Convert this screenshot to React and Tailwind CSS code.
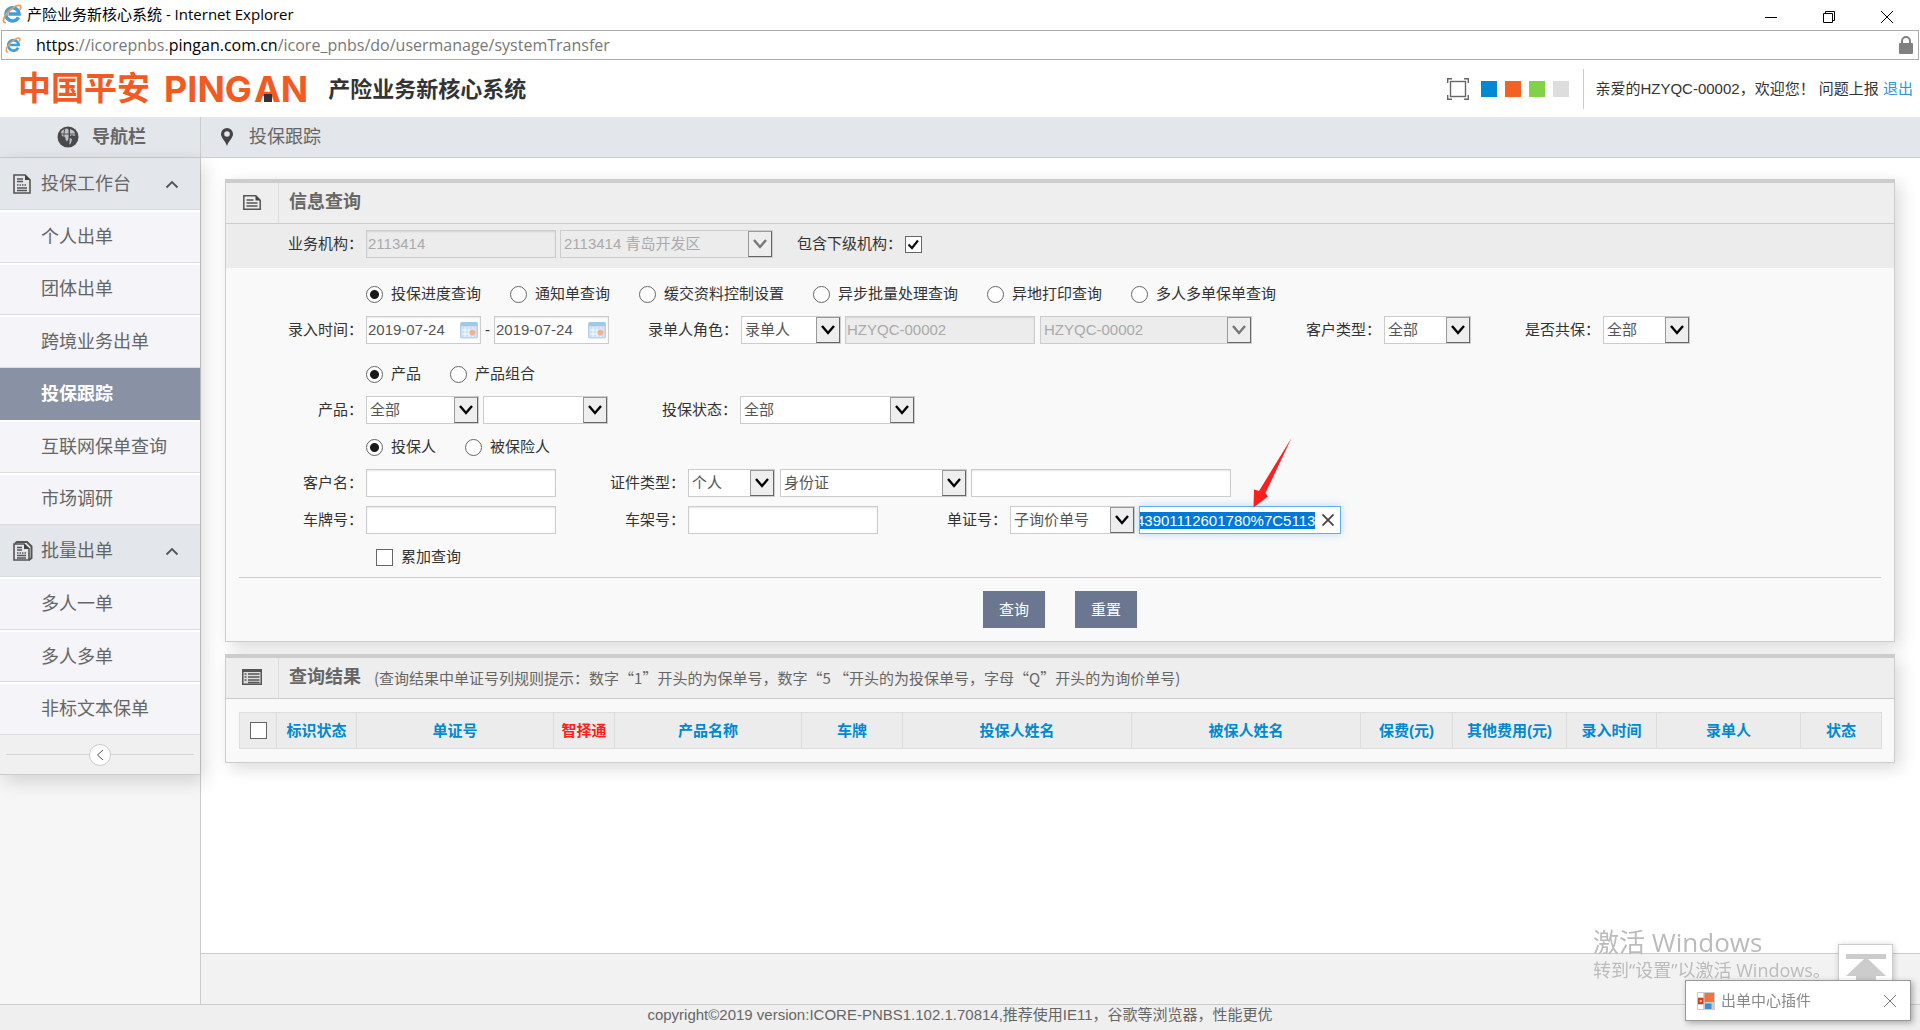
import { useEffect, useRef, useState } from 'react'
import clsx from 'clsx'

const MENU = [
  {
    id: 'work',
    title: '投保工作台',
    icon: <DocIcon />,
    items: ['个人出单', '团体出单', '跨境业务出单', '投保跟踪', '互联网保单查询', '市场调研'],
    height: 'h-[315px]',
  },
  {
    id: 'batch',
    title: '批量出单',
    icon: <DocsIcon />,
    items: ['多人一单', '多人多单', '非标文本保单'],
    height: 'h-[158px]',
  },
]

const QUERY_TYPES = [
  '投保进度查询',
  '通知单查询',
  '缓交资料控制设置',
  '异步批量处理查询',
  '异地打印查询',
  '多人多单保单查询',
]

const COLUMNS = [
  { name: '标识状态', width: 'w-[80px]' },
  { name: '单证号', width: 'w-[197px]' },
  { name: '智择通', width: 'w-[61px]', hot: true },
  { name: '产品名称', width: 'w-[187px]' },
  { name: '车牌', width: 'w-[101px]' },
  { name: '投保人姓名', width: 'w-[229px]' },
  { name: '被保人姓名', width: 'w-[229px]' },
  { name: '保费(元)', width: 'w-[92px]' },
  { name: '其他费用(元)', width: 'w-[114px]' },
  { name: '录入时间', width: 'w-[90px]' },
  { name: '录单人', width: 'w-[144px]' },
  { name: '状态', width: 'w-[81px]' },
]

function IeIcon({ className }) {
  return (
    <svg viewBox="0 0 20 20" className={className} fill="none" aria-hidden="true">
      <path d="M16.5 13.2a6.6 6.6 0 1 1 .6-3.2H6.4" stroke="#3d9fdc" strokeWidth="3.4" />
      <path d="M4 18.6C.2 19.6.6 14 5.6 8.4 10.400 3 17.600-.4 18.600 2.200c.4 1-.2 2.600-.8 3.400" stroke="#ee9a5b" strokeWidth="1.800" />
    </svg>
  )
}

function DocIcon() {
  return (
    <svg viewBox="0 0 18 20" className="w-[18px] h-5 shrink-0" fill="none" stroke="#555" aria-hidden="true">
      <path d="M1 1h11l5 5v13H1z" strokeWidth="1.600" />
      <path d="M12 0.500v5.500h5.500z" fill="#444" stroke="none" />
      <path d="M4 5h6M4 7.500h6M4 14h10M4 16.500h10" strokeWidth="1.400" />
      <path d="M4 11h10" strokeWidth="1.400" strokeDasharray="1.500 1" />
    </svg>
  )
}

function DocsIcon() {
  return (
    <svg viewBox="0 0 20 20" className="w-5 h-5 shrink-0" fill="none" stroke="#555" aria-hidden="true">
      <path d="M1 3h10l5 5v11H1z" strokeWidth="1.600" />
      <path d="M2 2.500L4 1h10l4.500 4.500V17L16 19" strokeWidth="2" />
      <path d="M11 2.500v5.500h6z" fill="#444" stroke="none" />
      <path d="M4 6.500h5M4 9h5M4 14.500h9M4 17h9" strokeWidth="1.400" />
      <path d="M4 12h9" strokeWidth="1.400" strokeDasharray="1.500 1" />
    </svg>
  )
}

function GlobeIcon() {
  return (
    <svg viewBox="0 0 22 22" className="w-[22px] h-[22px]" aria-hidden="true">
      <circle cx="11" cy="11" r="10.500" fill="#4a4a4a" />
      <path d="M4 6c1.500-2 4-3.500 6-3.500l2 1.500v8l-2 3.500-1.500-2v-2L5 10z" fill="#bfc3c9" />
      <path d="M13 3l4 2 1.500 4-1.500 1-2-1-2 1zM12.500 12l2.500 1-1 4-2 2z" fill="#bfc3c9" />
      <path d="M8 2.500c-1.500 4-1.500 11 0 16M3 8h16M12 2v18" stroke="#4a4a4a" strokeWidth=".9" fill="none" />
    </svg>
  )
}

function Chevron({ className, d = 'M1 1l6 7 6-7', thin }) {
  return (
    <svg viewBox="0 0 14 10" className={className} fill="none" stroke="currentColor" aria-hidden="true">
      <path d={d} strokeWidth={thin ? 1.8 : 2.4} />
    </svg>
  )
}

function CalendarIcon() {
  return (
    <svg viewBox="0 0 18 18" className="w-[18px] h-[18px]" aria-hidden="true">
      <rect x=".5" y="1.500" width="17" height="15.500" rx="1" fill="#c9e0f3" stroke="#b4cfe4" />
      <rect x="1" y="1" width="16" height="4" fill="#9cc9ec" />
      <path d="M2 9h14M2 13h14M5 6v10M9 6v10M13 6v10" stroke="#f4f9fd" />
      <circle cx="12.500" cy="11.500" r="3" fill="#f0b196" />
    </svg>
  )
}

function TitleBar() {
  return (
    <div className="bg-white">
      <div className="h-[30px] flex items-center justify-between pl-0.5 pr-[27px]">
        <div className="flex items-center gap-[5px] pb-0.5 font-['Open_Sans','Noto_Sans_CJK_SC',sans-serif] text-[15px] leading-5 text-black">
          <IeIcon className="w-5 h-5" />
          产险业务新核心系统 - Internet Explorer
        </div>
        <div className="flex items-center gap-[46px] pt-1">
          <button type="button" aria-label="最小化">
            <svg viewBox="0 0 12 12" className="w-3 h-3" stroke="#000" fill="none"><path d="M0 6.500h12" /></svg>
          </button>
          <button type="button" aria-label="还原">
            <svg viewBox="0 0 12 12" className="w-3 h-3" stroke="#000" fill="none"><path d="M.5 2.500h9v9h-9zM2.500 2.500v-2h9v9h-2" /></svg>
          </button>
          <button type="button" aria-label="关闭">
            <svg viewBox="0 0 12 12" className="w-3 h-3" stroke="#000" fill="none"><path d="M0 0l12 12M12 0L0 12" /></svg>
          </button>
        </div>
      </div>
      <div className="mx-px h-[30px] border border-[#aaa] flex items-center pl-[3px] pr-[5px]">
        <IeIcon className="w-4 h-4" />
        <div className="flex-1 pl-[15px] font-['Open_Sans',sans-serif] text-base leading-5 text-[#777]">
          <span className="text-black">https</span>://icorepnbs.<span className="text-black">pingan.com.cn</span>/icore_pnbs/do/usermanage/systemTransfer
        </div>
        <svg viewBox="0 0 14 18" className="w-[14px] h-[18px]" aria-hidden="true">
          <rect y="7" width="14" height="11" rx="1" fill="#808080" />
          <path d="M3 8V5a4 4 0 0 1 8 0v3" fill="none" stroke="#808080" strokeWidth="2" />
        </svg>
      </div>
    </div>
  )
}

function Header() {
  return (
    <header className="h-[57px] bg-white flex items-center justify-between pl-[18px] pr-[7px]">
      <div className="flex items-center">
        <div className="flex items-center text-[#f15a22] leading-8">
          <span className="text-[33px] font-bold">中国平安</span>
          <span className="pl-3.5 text-4xl leading-8 font-bold font-['Inter',sans-serif]">PING</span>
          <span className="relative pl-0.5 text-4xl leading-8 font-bold font-['Inter',sans-serif]">
            AN
            <span className="absolute left-3 bottom-[3px] w-2 h-2 bg-[#333]" />
          </span>
        </div>
        <h1 className="ml-5 pt-0.5 text-[22px] leading-8 font-bold text-[#333]">产险业务新核心系统</h1>
      </div>
      <div className="flex items-center">
        <button type="button" aria-label="全屏" className="mr-3">
          <svg viewBox="0 0 22 22" className="w-[22px] h-[22px]" fill="none" stroke="#666">
            <rect x="3.500" y="3.500" width="15" height="15" strokeWidth="1.400" />
            <path d="M.7 5V.7H5M17 .7h4.300V5M21.300 17v4.300H17M5 21.300H.7V17" strokeWidth="1.400" />
          </svg>
        </button>
        <div className="flex gap-2">
          <button type="button" aria-label="蓝色主题" className="w-4 h-4 bg-[#0089d0]" />
          <button type="button" aria-label="橙色主题" className="w-4 h-4 bg-[#f26322]" />
          <button type="button" aria-label="绿色主题" className="w-4 h-4 bg-[#83d04b]" />
          <button type="button" aria-label="灰色主题" className="w-4 h-4 bg-[#ddd]" />
        </div>
        <div className="ml-3.5 h-10 border-l border-[#ccc]" />
        <div className="ml-[11px] pt-px text-[15px] leading-5 text-[#333]">
          亲爱的HZYQC-00002，欢迎您！ 问题上报 <a href="#logout" className="text-[#2e94d4]">退出</a>
        </div>
      </div>
    </header>
  )
}

function Sidebar({ active, onSelect }) {
  return (
    <aside className="w-[201px] shrink-0 border-r border-[#ccc] bg-[#f6f6f6]">
      <div className="h-[41px] bg-[#e3e6eb] border-b border-[#ccc] flex items-center gap-[13px] pl-[57px] text-lg leading-6 font-bold text-[#666]">
        <GlobeIcon />
        导航栏
      </div>
      <div className="shadow-[4px_6px_18px_rgba(0,0,0,0.15)]">
        {MENU.map(group => (
          <div key={group.id}>
            <div className="h-[52px] bg-[#e3e6eb] border-b border-[#d8dbe0] flex items-center pl-[13px] pr-[21px] text-lg leading-6 text-[#666]">
              <div className="w-7">{group.icon}</div>
              <span className="flex-1">{group.title}</span>
              <Chevron thin className="w-3.5 h-2.5 text-[#555]" d="M1.500 8.500L7 3l5.500 5.500" />
            </div>
            <ul className={clsx('flex flex-col bg-[#f4f4f9]', group.height)}>
              {group.items.map(name => (
                <li key={name} className="flex-1 flex">
                  <button
                    type="button"
                    onClick={() => onSelect(name)}
                    className={clsx(
                      'flex-1 pl-[41px] text-left text-lg leading-6',
                      name === active
                        ? 'bg-[#8892a4] text-white font-bold'
                        : 'text-[#666] border-t-2 border-t-white border-b border-b-[#ddd]',
                    )}
                  >
                    {name}
                  </button>
                </li>
              ))}
            </ul>
          </div>
        ))}
        <div className="h-10 bg-[#f0f0f0] border-b border-[#ccc] flex items-center px-1.5">
          <div className="flex-1 h-px bg-[#d5d5d5]" />
          <button type="button" aria-label="收起" className="w-[22px] h-[22px] rounded-full bg-white border border-[#ccc] flex items-center justify-center">
            <svg viewBox="0 0 8 12" className="w-2 h-3" fill="none" stroke="#555"><path d="M7 1L1.500 6 7 11" /></svg>
          </button>
          <div className="flex-1 h-px bg-[#d5d5d5]" />
        </div>
      </div>
    </aside>
  )
}

function Panel({ icon, title, note, children }) {
  return (
    <section className="bg-[#f9f9f9] border border-t-4 border-[#ccc] shadow-[5px_5px_16px_rgba(0,0,0,0.15)]">
      <div className="h-[41px] bg-[#eee] border-b border-[#ccc] flex items-stretch">
        <div className="w-[53px] border-r border-[#ddd] flex items-center justify-center pb-0.5">{icon}</div>
        <div className="flex items-center pl-2.5 pb-0.5 text-[#666]">
          <h2 className="text-lg leading-6 font-bold">{title}</h2>
          {note && <p className="pl-[13px] pt-0.5 text-[15px] leading-5 font-['Noto_Sans_CJK_SC',sans-serif]">{note}</p>}
        </div>
      </div>
      {children}
    </section>
  )
}

function Row({ className, children }) {
  return <div className={clsx('flex items-center h-7', className)}>{children}</div>
}

function Label({ htmlFor, first, children }) {
  return (
    <label htmlFor={htmlFor} className={clsx('shrink-0 pr-[3px] text-right', first ? 'w-[140px]' : 'w-[132px]')}>
      {children}：
    </label>
  )
}

function TextBox({ className, disabled, ...rest }) {
  return (
    <input
      type="text"
      disabled={disabled}
      className={clsx(
        'h-7 pl-px pb-0.5 border border-[#ccc] shadow-[inset_0_1px_2px_rgba(0,0,0,0.1)] outline-none',
        disabled ? 'bg-[#ececec] text-[#aaa]' : 'bg-white text-[#555]',
        className,
      )}
      {...rest}
    />
  )
}

function Select({ className, disabled, options, ...rest }) {
  return (
    <div className={clsx('relative shrink-0', className)}>
      <select
        disabled={disabled}
        className={clsx(
          'block appearance-none w-full h-7 pl-[3px] border border-[#ccc] outline-none opacity-100',
          disabled ? 'bg-[#ececec] text-[#aaa]' : 'bg-white text-[#555]',
        )}
        {...rest}
      >
        {options.map(item => <option key={item}>{item}</option>)}
      </select>
      <span
        className={clsx(
          'pointer-events-none absolute right-px top-px w-6 h-[26px] flex items-center justify-center bg-[#eee] border border-t-[#999] border-l-[#999] border-r-[#666] border-b-[#666]',
          disabled ? 'text-[#777]' : 'text-black',
        )}
      >
        <Chevron className="w-3.5 h-2.5" />
      </span>
    </div>
  )
}

function Radios({ name, options }) {
  return (
    <div className="flex gap-[29px]">
      {options.map((item, i) => (
        <label key={item} className="flex items-center gap-2">
          <input
            type="radio"
            name={name}
            defaultChecked={i === 0}
            className="appearance-none w-[17px] h-[17px] rounded-full border border-[#666] bg-white checked:bg-[radial-gradient(circle,#1a1a1a_4px,#fff_5px)]"
          />
          {item}
        </label>
      ))}
    </div>
  )
}

function CheckBox({ id, defaultChecked, label }) {
  return (
    <span className="relative inline-flex w-[17px] h-[17px]">
      <input
        id={id}
        type="checkbox"
        aria-label={label}
        defaultChecked={defaultChecked}
        className="peer appearance-none w-[17px] h-[17px] border border-[#666] bg-white"
      />
      <svg viewBox="0 0 17 17" className="hidden peer-checked:block pointer-events-none absolute inset-0" fill="none" stroke="#111" aria-hidden="true">
        <path d="M3.500 8.500l3.500 3.500 6-7.500" strokeWidth="2.200" />
      </svg>
    </span>
  )
}

function DateBox({ id, label }) {
  return (
    <div className="relative w-[115px]">
      <TextBox id={id} aria-label={label} defaultValue="2019-07-24" className="block w-full pr-6" />
      <span className="absolute right-[3px] top-[5px]"><CalendarIcon /></span>
    </div>
  )
}

function VoucherBox() {
  const ref = useRef(null)

  useEffect(() => {
    const el = ref.current
    el.focus()
    el.select()
    el.scrollLeft = el.scrollWidth
  }, [])

  function clear() {
    ref.current.value = ''
    ref.current.focus()
  }

  return (
    <div className="relative ml-1 w-[202px] h-7 flex items-center bg-white border border-[#5fb2e8] shadow-[0_0_8px_rgba(82,168,236,0.4)]">
      <input
        ref={ref}
        type="text"
        aria-label="单证号码"
        defaultValue="43901112601780%7C5113"
        className="flex-1 min-w-0 h-[22px] text-[#555] outline-none selection:bg-[#0078d7] selection:text-white"
      />
      <button type="button" aria-label="清除" onClick={clear} className="w-[25px] h-6 flex items-center justify-center">
        <svg viewBox="0 0 12 12" className="w-3 h-3" fill="none" stroke="#444"><path d="M.5.5l11 11M11.500.5l-11 11" strokeWidth="1.800" /></svg>
      </button>
      <svg viewBox="0 0 39 70" className="pointer-events-none absolute left-[113px] bottom-[25px] w-[39px] h-[70px]" fill="#ff1e1e" aria-hidden="true">
        <path d="M38.500 0L12.500 55l2.500 3.500L.5 69.500 1 51.500l5 1.500z" />
      </svg>
    </div>
  )
}

function QueryPanel() {
  const icon = (
    <svg viewBox="0 0 18 15" className="w-[18px] h-[15px]" fill="none" stroke="#555" aria-hidden="true">
      <path d="M.8.8h12l4.400 4.400v9H.8z" strokeWidth="1.500" />
      <path d="M12.500.5v5h5z" fill="#444" stroke="none" />
      <path d="M3.500 5h7M3.500 8h11M3.500 11h11" strokeWidth="1.400" />
    </svg>
  )

  return (
    <Panel icon={icon} title="信息查询">
      <form onSubmit={e => e.preventDefault()} className="text-[15px] leading-5 text-[#333]">
        <div className="h-11 pt-1.5 bg-[#ececec]">
          <Row>
            <Label first htmlFor="org">业务机构</Label>
            <TextBox id="org" disabled defaultValue="2113414" className="w-[190px] mr-1" />
            <Select disabled aria-label="机构名称" className="w-[213px]" options={['2113414 青岛开发区']} />
            <Label htmlFor="sub">包含下级机构</Label>
            <CheckBox id="sub" defaultChecked />
          </Row>
        </div>
        <div className="pt-3">
          <Row className="pl-[140px]">
            <Radios name="queryType" options={QUERY_TYPES} />
          </Row>
          <Row className="mt-2">
            <Label first htmlFor="from">录入时间</Label>
            <DateBox id="from" />
            <span className="w-[13px] text-center">-</span>
            <DateBox id="to" label="录入时间止" />
            <Label htmlFor="role">录单人角色</Label>
            <Select id="role" className="w-[100px] mr-1" options={['录单人']} />
            <TextBox disabled aria-label="录单人代码" defaultValue="HZYQC-00002" className="w-[190px] mr-[5px]" />
            <Select disabled aria-label="录单人" className="w-[212px]" options={['HZYQC-00002']} />
            <Label htmlFor="custType">客户类型</Label>
            <Select id="custType" className="w-[87px]" options={['全部']} />
            <Label htmlFor="coins">是否共保</Label>
            <Select id="coins" className="w-[87px]" options={['全部']} />
          </Row>
          <Row className="mt-4 pl-[140px]">
            <Radios name="productKind" options={['产品', '产品组合']} />
          </Row>
          <Row className="mt-2">
            <Label first htmlFor="product">产品</Label>
            <Select id="product" className="w-[113px] mr-1" options={['全部']} />
            <Select aria-label="产品明细" className="w-[125px]" options={['']} />
            <Label htmlFor="status">投保状态</Label>
            <Select id="status" className="w-[175px]" options={['全部']} />
          </Row>
          <Row className="mt-[9px] pl-[140px]">
            <Radios name="person" options={['投保人', '被保险人']} />
          </Row>
          <Row className="mt-2">
            <Label first htmlFor="custName">客户名</Label>
            <TextBox id="custName" className="w-[190px]" />
            <Label htmlFor="certType">证件类型</Label>
            <Select id="certType" className="w-[87px] mr-[5px]" options={['个人']} />
            <Select aria-label="证件" className="w-[187px] mr-1" options={['身份证']} />
            <TextBox aria-label="证件号码" className="w-[260px]" />
          </Row>
          <Row className="mt-[9px]">
            <Label first htmlFor="plate">车牌号</Label>
            <TextBox id="plate" className="w-[190px]" />
            <Label htmlFor="vin">车架号</Label>
            <TextBox id="vin" className="w-[190px]" />
            <Label htmlFor="voucher">单证号</Label>
            <Select id="voucher" className="w-[125px]" options={['子询价单号']} />
            <VoucherBox />
          </Row>
          <Row className="mt-[9px] pl-[150px] gap-2">
            <CheckBox id="accumulate" />
            <label htmlFor="accumulate">累加查询</label>
          </Row>
          <div className="mx-[13px] mt-1.5 border-t border-[#ccc] flex justify-center gap-[30px] pt-[13px] pb-[13px]">
            <button type="submit" className="w-[62px] h-[37px] bg-[#6b7790] text-white">查询</button>
            <button type="reset" className="w-[62px] h-[37px] bg-[#6b7790] text-white">重置</button>
          </div>
        </div>
      </form>
    </Panel>
  )
}

function ResultPanel() {
  const icon = (
    <svg viewBox="0 0 20 16" className="w-5 h-4" aria-hidden="true">
      <rect width="20" height="16" fill="#555" />
      <rect x="1.500" y="3" width="17" height="11.500" fill="#ddd" />
      <path d="M2.500 5h2M2.500 8h2M2.500 11h2M6 5h11.500M6 8h11.500M6 11h11.500M6 13.500h11.500" stroke="#555" strokeWidth="1.300" />
    </svg>
  )

  return (
    <Panel
      icon={icon}
      title="查询结果"
      note="(查询结果中单证号列规则提示：数字“1”开头的为保单号，数字“5 “开头的为投保单号，字母“Q”开头的为询价单号)"
    >
      <div className="p-[13px]">
        <table className="w-full table-fixed border-collapse text-[15px] leading-5">
          <thead>
            <tr className="h-9 bg-[#ececec]">
              <th className="w-[37px] border border-[#ddd]">
                <span className="flex justify-center"><CheckBox label="全选" /></span>
              </th>
              {COLUMNS.map(col => (
                <th
                  key={col.name}
                  className={clsx('border border-[#ddd] font-bold whitespace-nowrap', col.width, col.hot ? 'text-[#ff1e1e]' : 'text-[#0089d0]')}
                >
                  {col.name}
                </th>
              ))}
            </tr>
          </thead>
        </table>
      </div>
    </Panel>
  )
}

function Plugin({ onClose }) {
  return (
    <div className="fixed right-[9px] bottom-[9px] w-[226px] h-[41px] bg-white border border-[#999] shadow-[2px_2px_6px_rgba(0,0,0,0.3)] flex items-center pl-[11px] pr-3.5 text-[15px] leading-5 text-[#888]">
      <svg viewBox="0 0 18 18" className="w-[18px] h-[18px] mr-1.5" aria-hidden="true">
        <rect width="18" height="18" fill="#ccc" />
        <rect x="1" y="1" width="5" height="4" fill="#fff" />
        <rect x="1" y="13" width="5" height="4" fill="#fff" />
        <rect x="7.500" y="1" width="9.500" height="9" fill="#ee7440" />
        <rect x="1" y="6" width="5.500" height="6" fill="#c8401c" />
        <rect x="8" y="11.500" width="6.500" height="5.500" fill="#3a8fd0" />
        <circle cx="3.800" cy="9" r="1.300" fill="#f3b59a" />
      </svg>
      <span className="flex-1">出单中心插件</span>
      <button type="button" aria-label="关闭插件" onClick={onClose}>
        <svg viewBox="0 0 12 12" className="w-3 h-3" fill="none" stroke="#777"><path d="M0 0l12 12M12 0L0 12" /></svg>
      </button>
    </div>
  )
}

export default function App() {
  const [active, setActive] = useState('投保跟踪')
  const [plugin, setPlugin] = useState(true)

  return (
    <div className="min-h-screen flex flex-col bg-white font-['Liberation_Sans','Noto_Sans_CJK_SC',sans-serif]">
      <TitleBar />
      <Header />
      <div className="flex-1 flex">
        <Sidebar active={active} onSelect={setActive} />
        <div className="flex-1 min-w-0 flex flex-col">
          <div className="h-[41px] bg-[#e3e6eb] border-b border-[#ccc] flex items-center gap-4 pl-5 text-lg leading-6 text-[#666]">
            <svg viewBox="0 0 12 18" className="w-3 h-[18px]" aria-hidden="true">
              <path fillRule="evenodd" d="M6 0a6 6 0 0 1 6 6c0 4-4.500 7-6 12C4.500 13 0 10 0 6a6 6 0 0 1 6-6zm0 3.200a2.800 2.800 0 1 0 0 5.600 2.800 2.800 0 0 0 0-5.600z" fill="#444" />
            </svg>
            投保跟踪
          </div>
          <main className="flex-1 pt-[21px] pl-6 pr-[25px] space-y-3">
            <QueryPanel />
            <ResultPanel />
          </main>
          <div className="h-[51px] bg-[#f2f2f2] border-t border-[#ccc]" />
        </div>
      </div>
      <footer className="h-[26px] bg-[#efefef] border-t border-[#ccc] text-center text-[15px] leading-5 text-[#666]">
        copyright©2019 version:ICORE-PNBS1.102.1.70814,推荐使用IE11，谷歌等浏览器，性能更优
      </footer>

      <div className="pointer-events-none fixed right-[93px] bottom-12 w-[234px] whitespace-nowrap text-[#bbb] font-['Open_Sans','Noto_Sans_CJK_SC',sans-serif]">
        <div className="text-[26px] leading-8">激活 Windows</div>
        <div className="text-lg leading-6">转到“设置”以激活 Windows。</div>
      </div>
      <button type="button" aria-label="返回顶部" className="fixed right-[27px] bottom-[31px] w-[55px] h-[55px] bg-white border border-[#ccc] shadow-[1px_1px_6px_rgba(0,0,0,0.2)] flex items-center justify-center">
        <svg viewBox="0 0 40 36" className="w-10 h-9" fill="#ccc" aria-hidden="true">
          <path d="M0 0h40v5H22l18 17H30v14H10V22H0L18 5H0z" />
        </svg>
      </button>
      {plugin && <Plugin onClose={() => setPlugin(false)} />}
    </div>
  )
}
